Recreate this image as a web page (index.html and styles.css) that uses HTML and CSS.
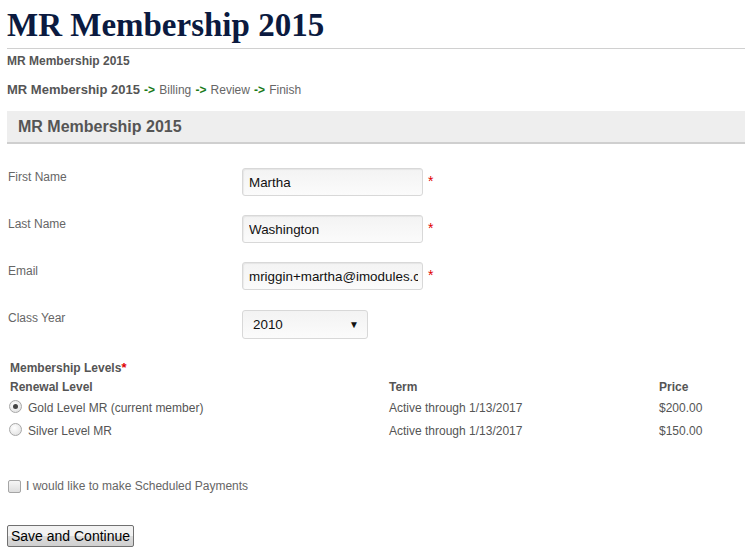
FILE: index.html
```html
<!DOCTYPE html>
<html>
<head>
<meta charset="utf-8">
<link rel="stylesheet" href="styles.css">
</head>
<body>
<div class="page">
  <h1 class="title">MR Membership 2015</h1>
  <div class="subtitle">MR Membership 2015</div>
  <div class="crumbs"><b>MR Membership 2015</b> <span class="arr">-&gt;</span> Billing <span class="arr">-&gt;</span> Review <span class="arr">-&gt;</span> Finish</div>
  <div class="panel">MR Membership 2015</div>

  <div class="form">
    <div class="row">
      <label class="lbl">First Name</label>
      <div class="field"><input class="txt" type="text" value="Martha"><span class="req">*</span></div>
    </div>
    <div class="row">
      <label class="lbl">Last Name</label>
      <div class="field"><input class="txt" type="text" value="Washington"><span class="req">*</span></div>
    </div>
    <div class="row">
      <label class="lbl">Email</label>
      <div class="field"><input class="txt" type="text" value="mriggin+martha@imodules.com"><span class="req">*</span></div>
    </div>
    <div class="row">
      <label class="lbl">Class Year</label>
      <div class="field"><div class="sel"><span>2010</span><span class="caret">&#9660;</span></div></div>
    </div>
  </div>

  <div class="levels">
    <div class="levels-title">Membership Levels<span class="req">*</span></div>
    <div class="grid">
      <div class="th">Renewal Level</div><div class="th">Term</div><div class="th">Price</div>
      <div class="td"><span class="radio checked"></span>Gold Level MR (current member)</div><div class="td">Active through 1/13/2017</div><div class="td">$200.00</div>
      <div class="td"><span class="radio"></span>Silver Level MR</div><div class="td">Active through 1/13/2017</div><div class="td">$150.00</div>
    </div>
  </div>

  <div class="sched"><span class="check"></span>I would like to make Scheduled Payments</div>

  <button class="btn">Save and Continue</button>
</div>
</body>
</html>
```

FILE: styles.css
```css
html, body { margin: 0; padding: 0; background: #fff; }
body { font-family: "Liberation Sans", Arial, sans-serif; color: #555; font-size: 12px; }
.page { padding: 0 0 0 7px; }
.title {
  font-family: "Liberation Serif", "Times New Roman", serif;
  font-weight: bold; font-size: 33px; color: #0b1a40;
  margin: 0; padding-top: 8px; line-height: 35px; height: 40px;
  border-bottom: 1px solid #d0d0d0;
}
.subtitle { font-weight: bold; font-size: 12px; color: #555; margin-top: 5px; line-height: 14px; }
.crumbs { font-size: 12px; color: #666; margin-top: 14px; line-height: 16px; word-spacing: 0.8px; }
.crumbs b { font-size: 13px; color: #555; word-spacing: 0; }
.arr { color: #1a7a1a; font-weight: bold; }
.panel {
  margin-top: 13px; background: #eeeeee; border-bottom: 2px solid #cfcfcf;
  height: 31px; line-height: 31px; padding-left: 11px;
  font-weight: bold; font-size: 16px; color: #555;
}
.form { margin-top: 26px; }
.row { display: flex; height: 47px; }
.lbl { width: 234px; padding-left: 1px; font-size: 12px; color: #666; line-height: 14px; }
.field { display: flex; align-items: flex-start; margin-top: -2px; }
.txt {
  box-sizing: border-box; width: 181px; height: 28px; margin: 0;
  border: 1px solid #d8d8d8; border-radius: 3px;
  background: linear-gradient(#f3f3f3, #fbfbfb);
  box-shadow: inset 1px 1px 1px rgba(0,0,0,0.06);
  font-family: "Liberation Sans", Arial, sans-serif; font-size: 13.4px; color: #111;
  padding: 0 4px 0 6px;
}
.req { color: #e00000; font-size: 14px; margin-left: 5px; line-height: 18px; margin-top: 4px; }
.sel {
  box-sizing: border-box; width: 126px; height: 29px; margin-top: 1px;
  border: 1px solid #d8d8d8; border-radius: 3px;
  background: linear-gradient(#f3f3f3, #fbfbfb);
  display: flex; align-items: center; justify-content: space-between;
  padding: 0 8px 0 10px; font-size: 13.4px; color: #111;
}
.caret { font-size: 10px; color: #111; }
.levels { margin-top: 1px; padding-left: 3px; }
.levels-title { font-weight: bold; font-size: 12px; color: #555; line-height: 14px; }
.levels-title .req { font-size: 13px; margin-left: 0; }
.grid { display: grid; grid-template-columns: 379px 270px 1fr; margin-top: 3px; }
.th { font-weight: bold; font-size: 12px; color: #555; line-height: 14px; padding-bottom: 7px; }
.td { font-size: 12px; color: #555; line-height: 14px; height: 23px; display: flex; align-items: flex-start; }
.radio {
  box-sizing: border-box; width: 13px; height: 13px; border-radius: 50%;
  border: 1px solid #a8a8a8; margin: -1px 6px 0 -1px;
  background: radial-gradient(circle at 40% 35%, #ffffff, #dcdcdc);
  display: inline-flex; align-items: center; justify-content: center;
}
.radio.checked::after { content: ""; width: 5px; height: 5px; border-radius: 50%; background: #444; }
.sched { margin-top: 32px; display: flex; align-items: center; font-size: 12px; color: #666; line-height: 14px; }
.check {
  box-sizing: border-box; width: 13px; height: 13px; border: 1px solid #a5a5a5; border-radius: 2px;
  background: linear-gradient(#f6f6f6, #dedede); margin: 0 5px 0 1px;
}
.btn {
  display: block; margin-top: 32px; box-sizing: border-box; width: 127px; height: 22px;
  border: 1px solid #707070; border-radius: 2px;
  background: linear-gradient(#f2f2f2 50%, #dddddd 50%, #cfcfcf);
  font-family: "Liberation Sans", Arial, sans-serif; font-size: 14px; color: #000; padding: 0;
}
```
